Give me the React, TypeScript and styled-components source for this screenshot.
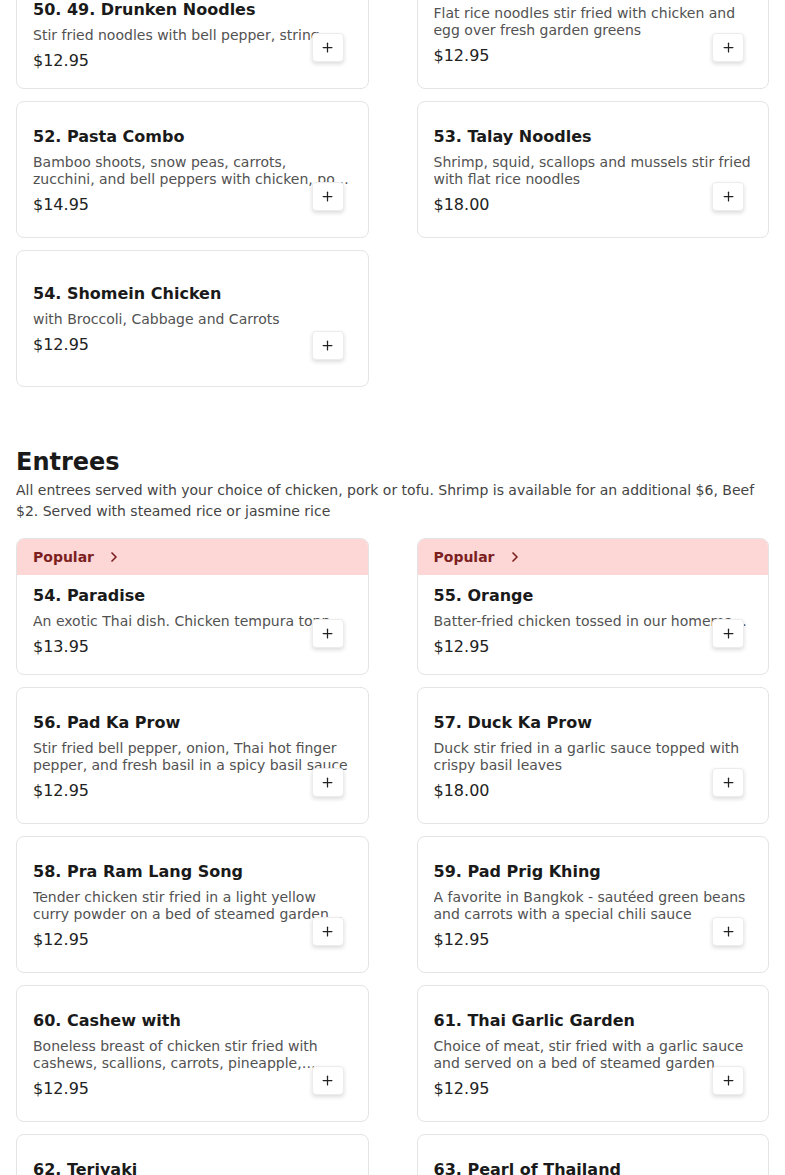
import React from "react";
import styled, { createGlobalStyle } from "styled-components";
import { ChevronRight, Plus } from "lucide-react";

const GlobalStyle = createGlobalStyle`
  html, body {
    margin: 0;
    padding: 0;
    background: #fff;
    overflow: hidden;
  }
  body {
    font-family: "DejaVu Sans", "Noto Sans", sans-serif;
    color: #1c1c1c;
  }
`;

type Item = {
  name: string;
  desc: string;
  price: string;
  popular?: boolean;
};

const noodles: Item[] = [
  {
    name: "50. 49. Drunken Noodles",
    desc: "Stir fried noodles with bell pepper, string beans, onion and fresh basil",
    price: "$12.95",
    popular: true
  },
  {
    name: "51. Pad See Ew",
    desc: "Flat rice noodles stir fried with chicken and egg over fresh garden greens",
    price: "$12.95"
  },
  {
    name: "52. Pasta Combo",
    desc: "Bamboo shoots, snow peas, carrots, zucchini, and bell peppers with chicken, pork or tofu over pasta",
    price: "$14.95"
  },
  {
    name: "53. Talay Noodles",
    desc: "Shrimp, squid, scallops and mussels stir fried with flat rice noodles",
    price: "$18.00"
  },
  {
    name: "54. Shomein Chicken",
    desc: "with Broccoli, Cabbage and Carrots",
    price: "$12.95"
  }
];

const entrees: Item[] = [
  {
    name: "54. Paradise",
    desc: "An exotic Thai dish. Chicken tempura topped with a sweet and sour sauce",
    price: "$13.95",
    popular: true
  },
  {
    name: "55. Orange",
    desc: "Batter-fried chicken tossed in our homemade orange sauce",
    price: "$12.95",
    popular: true
  },
  {
    name: "56. Pad Ka Prow",
    desc: "Stir fried bell pepper, onion, Thai hot finger pepper, and fresh basil in a spicy basil sauce",
    price: "$12.95"
  },
  {
    name: "57. Duck Ka Prow",
    desc: "Duck stir fried in a garlic sauce topped with crispy basil leaves",
    price: "$18.00"
  },
  {
    name: "58. Pra Ram Lang Song",
    desc: "Tender chicken stir fried in a light yellow curry powder on a bed of steamed garden greens topped with peanut sauce",
    price: "$12.95"
  },
  {
    name: "59. Pad Prig Khing",
    desc: "A favorite in Bangkok - sautéed green beans and carrots with a special chili sauce",
    price: "$12.95"
  },
  {
    name: "60. Cashew with",
    desc: "Boneless breast of chicken stir fried with cashews, scallions, carrots, pineapple, onions and bell peppers",
    price: "$12.95"
  },
  {
    name: "61. Thai Garlic Garden",
    desc: "Choice of meat, stir fried with a garlic sauce and served on a bed of steamed garden greens",
    price: "$12.95"
  },
  {
    name: "62. Teriyaki",
    desc: "Grilled chicken glazed with a sweet teriyaki sauce served over steamed vegetables",
    price: "$12.95"
  },
  {
    name: "63. Pearl of Thailand",
    desc: "Choice of meat sautéed with fresh vegetables in a light brown sauce with a hint of garlic",
    price: "$13.95"
  }
];

const Page = styled.main`
  padding: 0 16px;
  height: 1175px;
  overflow: hidden;
`;

// page is scrolled a little into the menu
const Scrolled = styled.div`
  margin-top: -48px;
`;

const Section = styled.section`
  & + & {
    margin-top: 59px;
  }
`;

const SectionTitle = styled.h2`
  margin: 0;
  font-size: 24px;
  line-height: 32px;
  font-weight: 700;
  color: #1a1a1a;
`;

const SectionNote = styled.p`
  margin: 2px 0 16px;
  font-size: 14px;
  line-height: 21px;
  color: #444;
`;

const Grid = styled.div`
  display: grid;
  grid-template-columns: 1fr 1fr;
  column-gap: 48px;
  row-gap: 12px;
`;

const Card = styled.article`
  position: relative;
  height: 137px;
  box-sizing: border-box;
  border: 1px solid #e4e4e4;
  border-radius: 8px;
  background: #fff;
  display: flex;
  flex-direction: column;
  overflow: hidden;
`;

const Badge = styled.div`
  display: flex;
  align-items: center;
  gap: 12px;
  height: 36px;
  padding: 0 16px;
  background: #fdd6d6;
  color: #7c1f1f;
  font-size: 14px;
  font-weight: 700;
`;

const Body = styled.div<{ $popular?: boolean }>`
  flex: 1;
  display: flex;
  flex-direction: column;
  justify-content: ${(p) => (p.$popular ? "flex-start" : "center")};
  padding: ${(p) => (p.$popular ? "11px 16px 0" : "2px 16px 0")};
`;

const Name = styled.h3`
  margin: 0;
  font-size: 16px;
  line-height: 20px;
  font-weight: 700;
  color: #1a1a1a;
  white-space: nowrap;
  overflow: hidden;
`;

const Desc = styled.p<{ $lines: number }>`
  margin: 7px 0 0;
  font-size: 14px;
  line-height: 17px;
  color: #525252;
  display: -webkit-box;
  -webkit-box-orient: vertical;
  -webkit-line-clamp: ${(p) => p.$lines};
  overflow: hidden;
`;

const Price = styled.div`
  margin-top: 7px;
  font-size: 16px;
  line-height: 20px;
  color: #222;
`;

const AddButton = styled.button`
  position: absolute;
  right: 24px;
  bottom: 26px;
  width: 32px;
  height: 29px;
  padding: 0;
  display: flex;
  align-items: center;
  justify-content: center;
  border: 1px solid #ececec;
  border-radius: 4px;
  background: #fff;
  color: #222;
  box-shadow: 0 2px 4px rgba(0, 0, 0, 0.14);
  cursor: pointer;
`;

function MenuCard({ item }: { item: Item }) {
  return (
    <Card>
      {item.popular && (
        <Badge>
          Popular
          <ChevronRight size={16} strokeWidth={2.5} />
        </Badge>
      )}
      <Body $popular={item.popular}>
        <Name>{item.name}</Name>
        <Desc $lines={item.popular ? 1 : 2}>{item.desc}</Desc>
        <Price>{item.price}</Price>
      </Body>
      <AddButton aria-label={`Add ${item.name}`}>
        <Plus size={15} strokeWidth={2} />
      </AddButton>
    </Card>
  );
}

export default function App() {
  return (
    <>
      <GlobalStyle />
      <Page>
        <Scrolled>
          <Section>
            <Grid>
              {noodles.map((item) => (
                <MenuCard key={item.name} item={item} />
              ))}
            </Grid>
          </Section>
          <Section>
            <SectionTitle>Entrees</SectionTitle>
            <SectionNote>
              All entrees served with your choice of chicken, pork or tofu. Shrimp is available for an
              additional $6, Beef $2. Served with steamed rice or jasmine rice
            </SectionNote>
            <Grid>
              {entrees.map((item) => (
                <MenuCard key={item.name} item={item} />
              ))}
            </Grid>
          </Section>
        </Scrolled>
      </Page>
    </>
  );
}
